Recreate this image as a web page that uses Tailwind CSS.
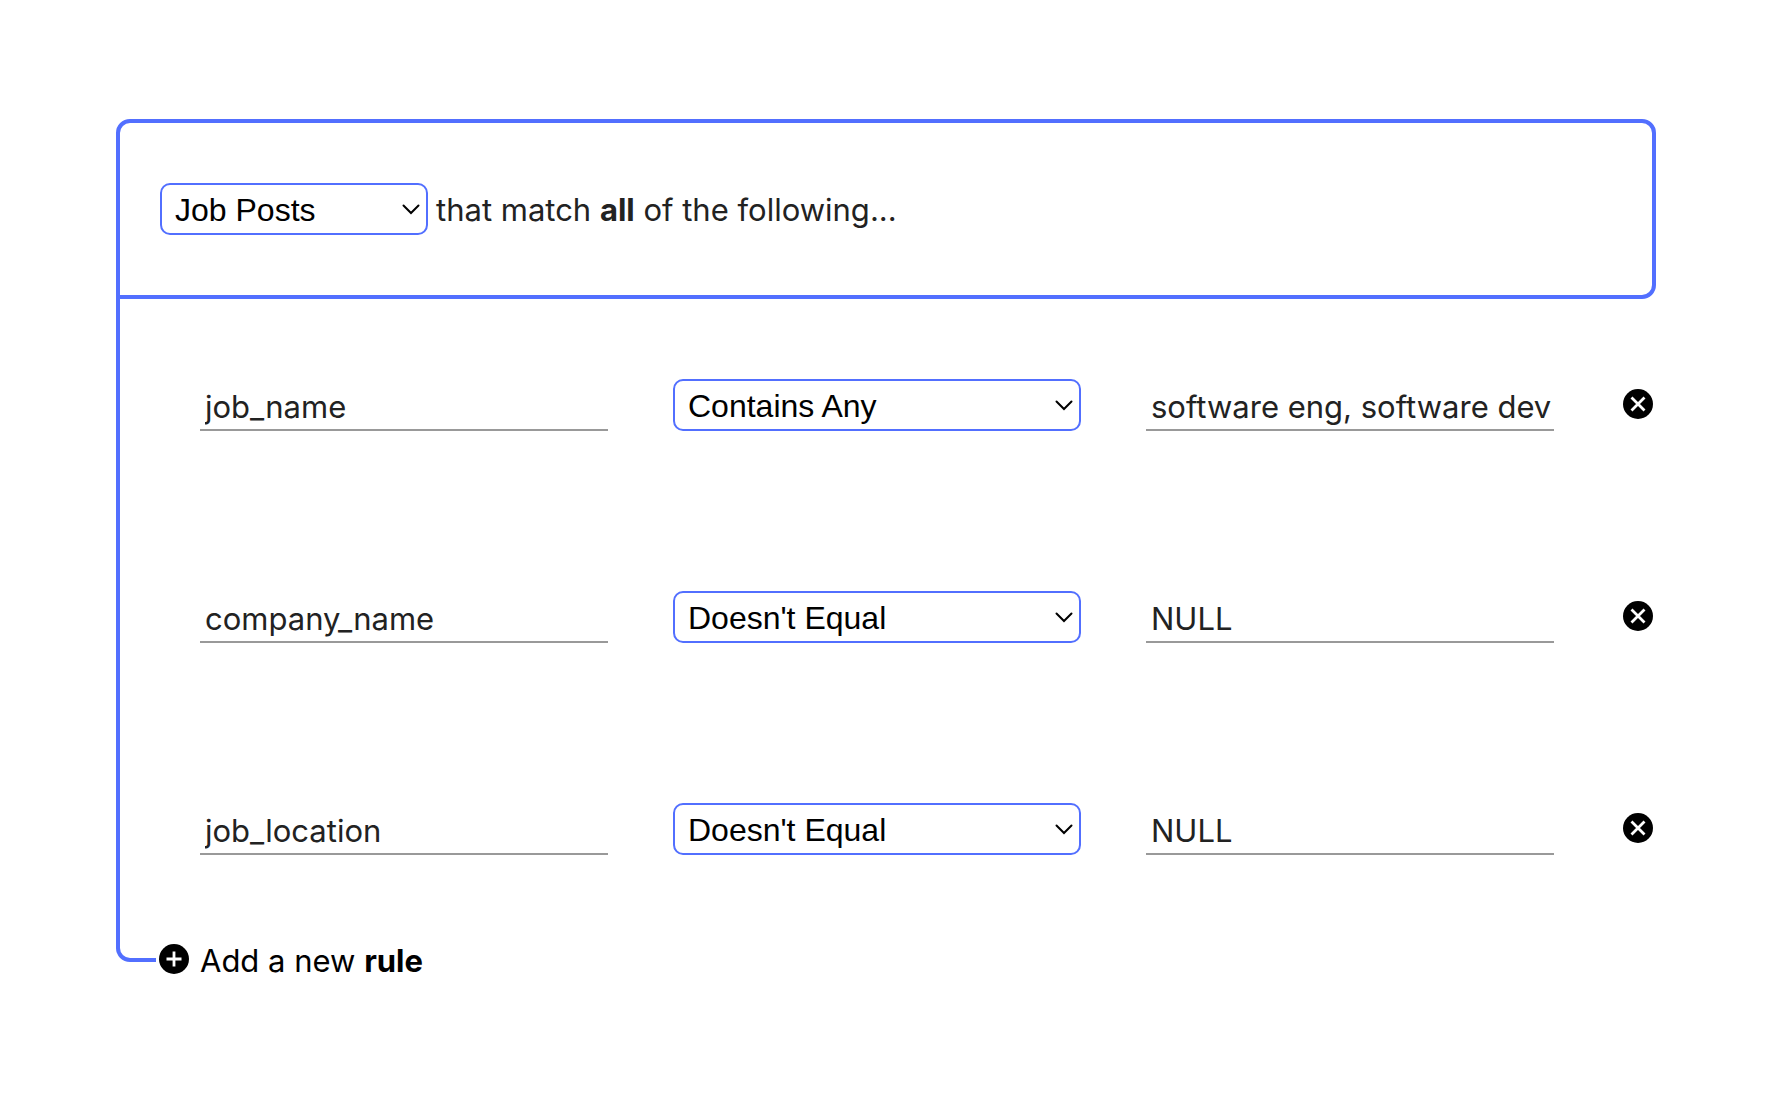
<!DOCTYPE html>
<html lang="en">
<head>
<meta charset="utf-8">
<meta name="viewport" content="width=device-width, initial-scale=1">
<title>Rule builder</title>
<script src="https://cdn.jsdelivr.net/npm/@tailwindcss/browser@4"></script>
</head>
<body class="bg-white font-['Inter',sans-serif] text-[31px] leading-9 text-[#222222]">
<svg class="hidden" aria-hidden="true">
  <symbol id="chevron" viewBox="0 0 18 12"><path d="M1.500 2.500 9 10 16.500 2.500" fill="none" stroke="#000" stroke-width="2" stroke-linecap="round" stroke-linejoin="miter"/></symbol>
  <symbol id="remove" viewBox="0 0 30 30"><circle cx="15" cy="15" r="15"/><path d="M8.500 8.500 21.500 21.500M21.500 8.500 8.500 21.500" stroke="#fff" stroke-width="2.800"/></symbol>
  <symbol id="add" viewBox="0 0 30 30"><circle cx="15" cy="15" r="15"/><path d="M15 7.500V22.500M7.500 15H22.500" stroke="#fff" stroke-width="2.800"/></symbol>
</svg>
<main class="pt-[119px] pr-[122px] pb-[119px] pl-[116px]">
  <header class="flex h-[180px] items-center gap-2 rounded-[14px] rounded-bl-none border-4 border-[#526fff] px-10">
    <div class="grid w-[268px] items-center">
      <select aria-label="Record type" class="col-start-1 row-start-1 h-[52px] w-full appearance-none rounded-[10px] border-2 border-[#526fff] bg-white px-[13px] pt-0.5 font-['Liberation_Sans',Arial,sans-serif] text-[32px] leading-9 text-black"><option>Job Posts</option></select>
      <svg class="pointer-events-none col-start-1 row-start-1 mr-2 h-3 w-[18px] justify-self-end"><use href="#chevron"/></svg>
    </div>
    <p class="pt-0.5">that match <strong class="font-bold">all</strong> of the following...</p>
  </header>

  <div class="flex flex-col gap-40 border-l-4 border-[#526fff] pt-20 pl-20">
    <div class="grid grid-cols-[1fr_1fr_1fr_37px] items-center gap-x-[65px]">
      <input aria-label="Field" value="job_name" class="h-[52px] w-full min-w-0 border-b-2 border-[#999999] pt-1 pl-[5px]">
      <div class="grid items-center">
        <select aria-label="Condition" class="col-start-1 row-start-1 h-[52px] w-full appearance-none rounded-[10px] border-2 border-[#526fff] bg-white px-[13px] pt-0.5 font-['Liberation_Sans',Arial,sans-serif] text-[32px] leading-9 text-black"><option>Contains Any</option></select>
        <svg class="pointer-events-none col-start-1 row-start-1 mr-2 h-3 w-[18px] justify-self-end"><use href="#chevron"/></svg>
      </div>
      <input aria-label="Value" value="software eng, software dev" class="h-[52px] w-full min-w-0 border-b-2 border-[#999999] pt-1 pl-[5px]">
      <button type="button" aria-label="Remove rule" class="flex justify-center pb-0.5 text-black"><svg class="size-[30px]" fill="currentColor"><use href="#remove"/></svg></button>
    </div>
    <div class="grid grid-cols-[1fr_1fr_1fr_37px] items-center gap-x-[65px]">
      <input aria-label="Field" value="company_name" class="h-[52px] w-full min-w-0 border-b-2 border-[#999999] pt-1 pl-[5px]">
      <div class="grid items-center">
        <select aria-label="Condition" class="col-start-1 row-start-1 h-[52px] w-full appearance-none rounded-[10px] border-2 border-[#526fff] bg-white px-[13px] pt-0.5 font-['Liberation_Sans',Arial,sans-serif] text-[32px] leading-9 text-black"><option>Doesn't Equal</option></select>
        <svg class="pointer-events-none col-start-1 row-start-1 mr-2 h-3 w-[18px] justify-self-end"><use href="#chevron"/></svg>
      </div>
      <input aria-label="Value" value="NULL" class="h-[52px] w-full min-w-0 border-b-2 border-[#999999] pt-1 pl-[5px]">
      <button type="button" aria-label="Remove rule" class="flex justify-center pb-0.5 text-black"><svg class="size-[30px]" fill="currentColor"><use href="#remove"/></svg></button>
    </div>
    <div class="grid grid-cols-[1fr_1fr_1fr_37px] items-center gap-x-[65px]">
      <input aria-label="Field" value="job_location" class="h-[52px] w-full min-w-0 border-b-2 border-[#999999] pt-1 pl-[5px]">
      <div class="grid items-center">
        <select aria-label="Condition" class="col-start-1 row-start-1 h-[52px] w-full appearance-none rounded-[10px] border-2 border-[#526fff] bg-white px-[13px] pt-0.5 font-['Liberation_Sans',Arial,sans-serif] text-[32px] leading-9 text-black"><option>Doesn't Equal</option></select>
        <svg class="pointer-events-none col-start-1 row-start-1 mr-2 h-3 w-[18px] justify-self-end"><use href="#chevron"/></svg>
      </div>
      <input aria-label="Value" value="NULL" class="h-[52px] w-full min-w-0 border-b-2 border-[#999999] pt-1 pl-[5px]">
      <button type="button" aria-label="Remove rule" class="flex justify-center pb-0.5 text-black"><svg class="size-[30px]" fill="currentColor"><use href="#remove"/></svg></button>
    </div>
  </div>

  <footer class="flex items-start gap-[3px]">
    <span class="h-[107px] w-10 rounded-bl-[14px] border-b-4 border-l-4 border-[#526fff]"></span>
    <button type="button" class="mt-[84px] flex items-center gap-[11px] text-black"><svg class="size-[30px]" fill="currentColor"><use href="#add"/></svg><span class="pt-1">Add a new <strong class="font-bold">rule</strong></span></button>
  </footer>
</main>
</body>
</html>
